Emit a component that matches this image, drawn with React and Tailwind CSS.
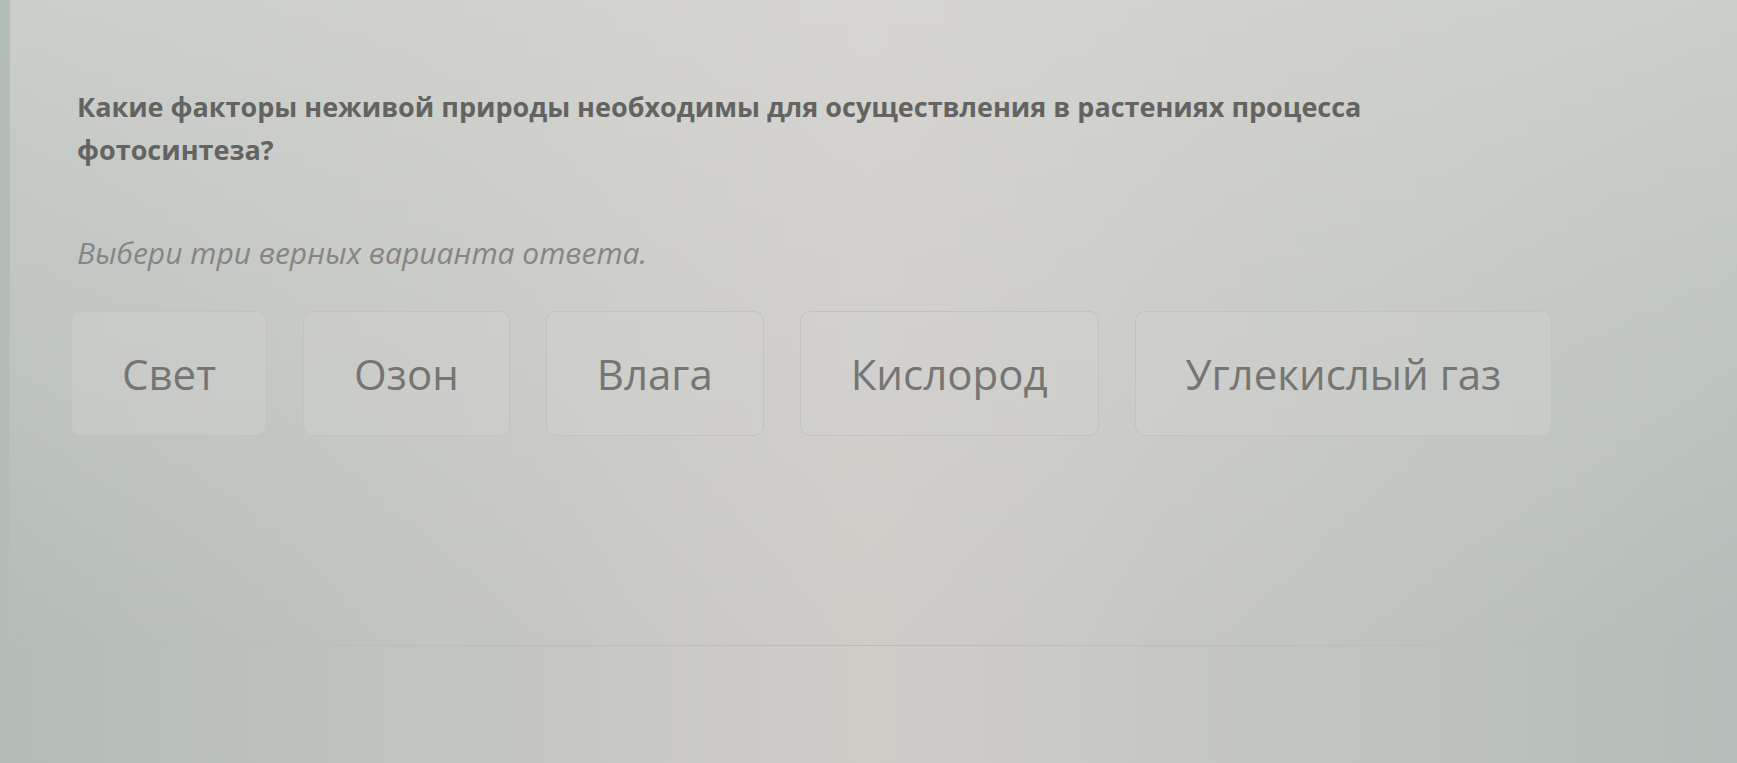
import React from 'react'

const options = ['Свет', 'Озон', 'Влага', 'Кислород', 'Углекислый газ']

const App = () => {
  return (
    <div className="w-full h-[763px] overflow-hidden bg-gradient-to-r from-[#b4bcb8] via-[#cfccc8] to-[#b4bdb9] font-['Open_Sans',sans-serif]">
      {/* Карточка вопроса */}
      <div className="ml-[9px] h-[646px] rounded-bl-[10px] border-b border-l border-[#bdbdb8] bg-gradient-to-b from-[#dadad6]/60 to-transparent pl-[67px] pt-[85px]">
        <h2 className="max-w-[1360px] text-[27px] font-bold leading-[43px] text-[#636462]">
          Какие факторы неживой природы необходимы для осуществления в растениях процесса фотосинтеза?
        </h2>

        <p className="mt-[62px] text-[30px] italic leading-[40px] text-[#858684]">
          Выбери три верных варианта ответа.
        </p>

        <div className="mt-[38px] flex gap-[36px] -ml-[6px]">
          {options.map((item) => (
            <button
              key={item}
              className="h-[125px] rounded-[10px] border border-[#c3c3be] bg-[#d3d3cf]/40 px-[50px] text-[42px] text-[#757674]"
            >
              {item}
            </button>
          ))}
        </div>
      </div>
    </div>
  )
}

export default App
